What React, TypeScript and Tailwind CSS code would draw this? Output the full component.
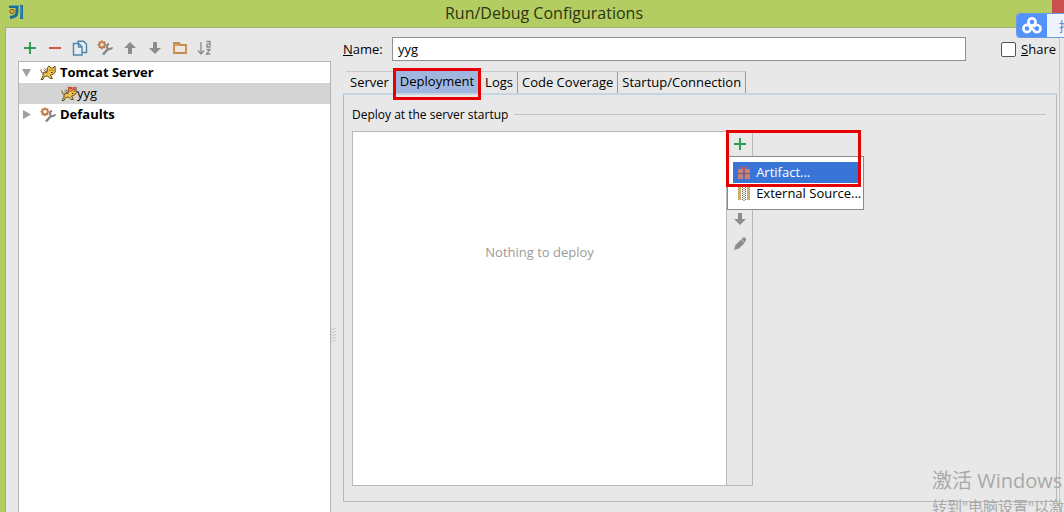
import React, { useState } from "react";
import clsx from "clsx";

function PlusIcon() {
    return (
        <svg width="16" height="16" viewBox="0 0 16 16" className="shrink-0">
            <path d="M8 2v12M2 8h12" stroke="#2f9e50" strokeWidth="2" />
        </svg>
    );
}

function MinusIcon() {
    return (
        <svg width="16" height="16" viewBox="0 0 16 16" className="shrink-0">
            <path d="M2 8h12" stroke="#cc5a45" strokeWidth="2" />
        </svg>
    );
}

function CopyIcon() {
    return (
        <svg width="16" height="16" viewBox="0 0 16 16" className="shrink-0" fill="#e4eef4" stroke="#4f86a4" strokeWidth="1.4">
            <path d="M6 1.2h5.5l3 3v8.3H6z" />
            <path d="M1.5 3.5h5.2L10 6.8V15H1.5z" />
            <path d="M6.5 3.5V7H10" fill="none" />
        </svg>
    );
}

function WrenchIcon() {
    return (
        <svg width="16" height="16" viewBox="0 0 16 16" className="shrink-0" fill="none">
            <circle cx="5" cy="4.8" r="2.7" stroke="#c47b48" strokeWidth="1.9" />
            <path d="M5 .3v1.5M5 7.8v1.5M.5 4.8H2M8 4.8h1.5M1.8 1.6l1 1M7.2 7l1 1M8.2 1.6l-1 1M2.8 7l-1 1" stroke="#c47b48" strokeWidth="1.5" />
            <path d="M6 14.5l5-5.500" stroke="#858585" strokeWidth="2.6" />
            <path d="M12 3.800a2.700 2.700 0 1 0 3.200 3.500" stroke="#858585" strokeWidth="2" />
        </svg>
    );
}

function ArrowIcon({ down }: { down?: boolean }) {
    return (
        <svg width="16" height="16" viewBox="0 0 16 16" className={clsx("shrink-0", down && "rotate-180")}>
            <path d="M8 2l6 6h-4v6H6V8H2z" fill="#8d8d8d" />
        </svg>
    );
}

function FolderIcon() {
    return (
        <svg width="16" height="16" viewBox="0 0 16 16" className="shrink-0">
            <path d="M2 3h5l1.5 2H14v8H2z" fill="#eee6da" stroke="#c58c4c" strokeWidth="1.8" />
            <path d="M2 5h7" stroke="#c58c4c" strokeWidth="1.5" />
        </svg>
    );
}

function SortIcon() {
    return (
        <svg width="16" height="16" viewBox="0 0 16 16" className="shrink-0" fill="none" stroke="#8a8a8a" strokeWidth="1.3">
            <path d="M4 2v12M1 10.5L4 14l3-3.5" />
            <path d="M9.500 1.500h3.500v5.500h-3V4.200h3M9.500 9.500h3.500L9.500 14h4" />
        </svg>
    );
}

function TomcatIcon({ running }: { running?: boolean }) {
    return (
        <svg width="16" height="16" viewBox="0 0 16 16" className="shrink-0">
            <path d="M3 8l4-1 .5-4.500L9 1l2 2h2l2-2 .3 6L13 9.500l-2.500.5 2 3.500H10L7.500 11l-3 .5L3 14.500H1L3 11z" fill="#edc34c" stroke="#5f4218" strokeWidth=".9" strokeLinejoin="round" />
            <path d="M.8 4.500q0 4 3 4M3.500 5l4 3M4.500 3.500L7.500 6" fill="none" stroke="#7f5a22" strokeWidth="1" />
            <path d="M9.500 5.200h1M12.500 5.200h1M11 7.500h1.500" stroke="#3b2a10" strokeWidth="1" />
            {running && <path d="M7 .8l3.500 4M11 .8L7.500 5M11 4.500l4-3.500M12 .8l2.500 4" stroke="#e0503f" strokeWidth="1.300" />}
        </svg>
    );
}

function PencilIcon() {
    return (
        <svg width="16" height="16" viewBox="0 0 16 16" className="shrink-0">
            <path d="M2 14l1.500-5L9 3.500 12.500 7 7 12.500zM9.500 3l1.500-1.500q1.500-.5 2.500.5t.5 2.500L12.500 6.500z" fill="#8d8d8d" />
        </svg>
    );
}

function ArtifactIcon() {
    return (
        <svg width="16" height="16" viewBox="0 0 16 16" className="shrink-0">
            <path d="M2 4h5v4H2zM9 4h5v4H9zM2 9h5v5H2zM9 9h5v5H9z" fill="#c98278" />
            <path d="M8 4v10M2 8.5h12" stroke="#8b5464" strokeWidth="1" />
            <path d="M8 4.5L4.5 1.5M8 4.5l3.5-3" stroke="#e05548" strokeWidth="1.6" />
        </svg>
    );
}

function SourceIcon() {
    return (
        <svg width="16" height="16" viewBox="0 0 16 16" className="shrink-0">
            <path d="M2 1h3v13H2zM11 1h3v13h-3z" fill="#c9b271" />
            <path d="M6.5 1v13M9.5 1v13" stroke="#665b55" strokeDasharray="1 1" />
            <path d="M8 2v13" stroke="#665b55" strokeDasharray="1 1" />
        </svg>
    );
}

function IdeaLogo() {
    return (
        <svg width="16" height="16" viewBox="0 0 16 16" className="shrink-0" fill="none">
            <path d="M1 2.500h8v5.500q0 5-7 5.500" stroke="#1b6d91" strokeWidth="3" />
            <path d="M13.500 1v14" stroke="#1b6d91" strokeWidth="3" />
            <path d="M1 1.500h9M13 2v12" stroke="#54a9bd" strokeWidth="1" />
            <circle cx="4" cy="7.5" r="2.2" fill="#eca53a" stroke="#7c5a2d" />
        </svg>
    );
}

function CloudLogo() {
    return (
        <svg width="20" height="18" viewBox="0 0 20 18" fill="none" stroke="#fff" strokeWidth="2.6">
            <circle cx="10" cy="5" r="3.6" />
            <circle cx="5" cy="11.5" r="3.6" />
            <path d="M8 9l4.500 5.200a3.600 3.600 0 1 0 0-5.300l-1 1" />
        </svg>
    );
}

const toolbar = [
    { label: "Add", icon: <PlusIcon /> },
    { label: "Remove", icon: <MinusIcon /> },
    { label: "Copy", icon: <CopyIcon /> },
    { label: "Edit defaults", icon: <WrenchIcon /> },
    { label: "Move up", icon: <ArrowIcon /> },
    { label: "Move down", icon: <ArrowIcon down /> },
    { label: "New folder", icon: <FolderIcon /> },
    { label: "Sort", icon: <SortIcon /> },
];

const tabs = ["Server", "Deployment", "Logs", "Code Coverage", "Startup/Connection"];

function Sidebar() {
    return (
        <aside className="w-[30%] max-w-[313px] shrink-0 flex flex-col">
            <div className="h-[33px] pl-1 pt-3 flex items-start gap-[9px]">
                {toolbar.map((item) => (
                    <button key={item.label} type="button" aria-label={item.label}>
                        {item.icon}
                    </button>
                ))}
            </div>
            <ul className="flex-1 bg-white border border-b-0 border-[#b4b4b4] leading-[21px]">
                <li className="h-[21px] pl-[3px] flex items-center font-bold">
                    <svg width="10" height="10" viewBox="0 0 10 10"><path d="M0 1h9L4.5 9z" fill="#a0a0a0" /></svg>
                    <span className="pl-2 flex items-center gap-1"><TomcatIcon />Tomcat Server</span>
                </li>
                <li className="h-[21px] pl-[42px] flex items-center bg-[#d4d4d4]">
                    <TomcatIcon running />yyg
                </li>
                <li className="h-[21px] pl-[3px] flex items-center font-bold">
                    <svg width="10" height="10" viewBox="0 0 10 10"><path d="M1 0v9l8-4.5z" fill="#a0a0a0" /></svg>
                    <span className="pl-2 flex items-center gap-1"><WrenchIcon />Defaults</span>
                </li>
            </ul>
        </aside>
    );
}

function DeployMenu() {
    return (
        <div className="absolute left-0 top-6 z-10 w-[137px] border border-[#8a8a8a] bg-white px-[5px] py-[5px] whitespace-nowrap">
            <button type="button" className="w-full h-[21px] pl-[3px] flex items-center gap-1 bg-[#3875d6] text-white">
                <ArtifactIcon />Artifact...
            </button>
            <button type="button" className="w-full h-[21px] pl-[3px] flex items-center gap-1">
                <SourceIcon />External Source...
            </button>
        </div>
    );
}

function DeploymentPanel() {
    return (
        <section className="flex-1 flex flex-col border border-t-0 border-[#b9b9b9] pl-2 pr-[10px] pb-[15px]">
            <div className="h-9 pt-[3px] flex items-center gap-[6px]">
                <h2 className="text-xs">Deploy at the server startup</h2>
                <span className="flex-1 h-px bg-[#c4c4c4]" />
            </div>
            <div className="w-[57.8%] flex-1 flex border border-[#b9b9b9]">
                <div className="flex-1 bg-white pt-[109px] text-center leading-[22px] text-[#9b9b9b]">
                    Nothing to deploy
                </div>
                <div className="relative w-[26px] border-l border-[#b9b9b9] pt-1 flex flex-col items-center gap-[9px]">
                    <button type="button" aria-label="Add deployment"><PlusIcon /></button>
                    <button type="button" aria-label="Remove deployment"><MinusIcon /></button>
                    <button type="button" aria-label="Move deployment up"><ArrowIcon /></button>
                    <button type="button" aria-label="Move deployment down"><ArrowIcon down /></button>
                    <button type="button" aria-label="Edit deployment"><PencilIcon /></button>
                    <DeployMenu />
                    <div className="pointer-events-none absolute -left-px -top-[2px] z-20 w-[135px] h-[57px] border-3 border-[#e60000]" />
                </div>
            </div>
        </section>
    );
}

export default function App() {
    const [name, setName] = useState("yyg");
    const [active, setActive] = useState("Deployment");

    return (
        <div className="relative w-full h-screen overflow-hidden flex flex-col bg-[#b3cd62] font-['Open_Sans','Noto_Sans_CJK_SC',sans-serif] text-[13px] text-black">
            <header className="h-[27px] shrink-0 relative flex items-center justify-center pb-[2px]">
                <span className="absolute left-2 top-1"><IdeaLogo /></span>
                <h1 className="pl-6 text-base leading-6 text-[#2c3510]">Run/Debug Configurations</h1>
                <button type="button" aria-label="Close" className="absolute right-0 top-0 w-3 h-[14px] bg-[#c9504e]" />
            </header>

            <main className="flex-1 min-h-0 ml-[5px] pl-3 flex border-l border-t border-[#a3b36d] bg-[#e8e8e8]">
                <Sidebar />
                <div className="w-3 shrink-0 flex items-center justify-center pt-[130px] pr-2">
                    <svg width="6" height="14" viewBox="0 0 6 14" className="shrink-0">
                        <path d="M1 0v14M3 1v13M5 0v14" stroke="#a9a9a9" strokeDasharray="1 2" />
                    </svg>
                </div>

                <div className="flex-1 min-w-0 flex flex-col pb-[10px]">
                    <div className="h-[43px] pt-[9px] flex items-start">
                        <label htmlFor="config-name" className="w-[49px] leading-6"><u>N</u>ame:</label>
                        <input
                            id="config-name"
                            value={name}
                            onChange={(e) => setName(e.target.value)}
                            className="flex-1 min-w-0 h-6 bg-white border border-[#909090] px-[5px] outline-none"
                        />
                        <label className="pl-[35px] pr-px flex items-center gap-[5px] leading-6">
                            <input type="checkbox" className="appearance-none size-[15px] rounded-xs border border-[#555] bg-white checked:bg-[#3875d6]" />
                            <span><u>S</u>hare</span>
                        </label>
                    </div>

                    <div role="tablist" className="relative h-[24px] pl-[3px] flex border-b-2 border-[#c5d5e2]">
                        {tabs.map((tab) => (
                            <button
                                key={tab}
                                type="button"
                                role="tab"
                                aria-selected={active === tab}
                                onClick={() => setActive(tab)}
                                className={clsx(
                                    "relative h-[22px] border-t border-r",
                                    active === tab
                                        ? "bg-[#a1b6df] border-[#a1b6df] px-[6px] pb-1"
                                        : "border-t-[#c9c9c9] border-r-[#999] px-1"
                                )}
                            >
                                {tab}
                                {tab === "Deployment" && (
                                    <span className="pointer-events-none absolute -left-px -right-px -top-1 z-10 h-8 border-3 border-[#e60000]" />
                                )}
                            </button>
                        ))}
                    </div>
                    <DeploymentPanel />
                </div>
                <div className="w-[3px] shrink-0 border-r border-[#c5c5c5] mr-1" />
            </main>

            <div className="absolute right-0 top-[13px] w-12 h-[25px] flex overflow-hidden rounded-l border border-r-0 border-[#6c9be0] bg-[#eef3fc]">
                <div className="w-[30px] shrink-0 flex items-center justify-center bg-[#5292fa]"><CloudLogo /></div>
                <span className="pl-3 leading-6 text-[#5b82d8]">拖</span>
            </div>

            <div className="pointer-events-none absolute right-0 bottom-0 w-[132px] h-[45px] overflow-hidden whitespace-nowrap text-[#a9a9a9]">
                <p className="text-xl leading-[28px]">激活 Windows</p>
                <p className="text-[15px] leading-[22px]">转到"电脑设置"以激活</p>
            </div>
        </div>
    );
}
